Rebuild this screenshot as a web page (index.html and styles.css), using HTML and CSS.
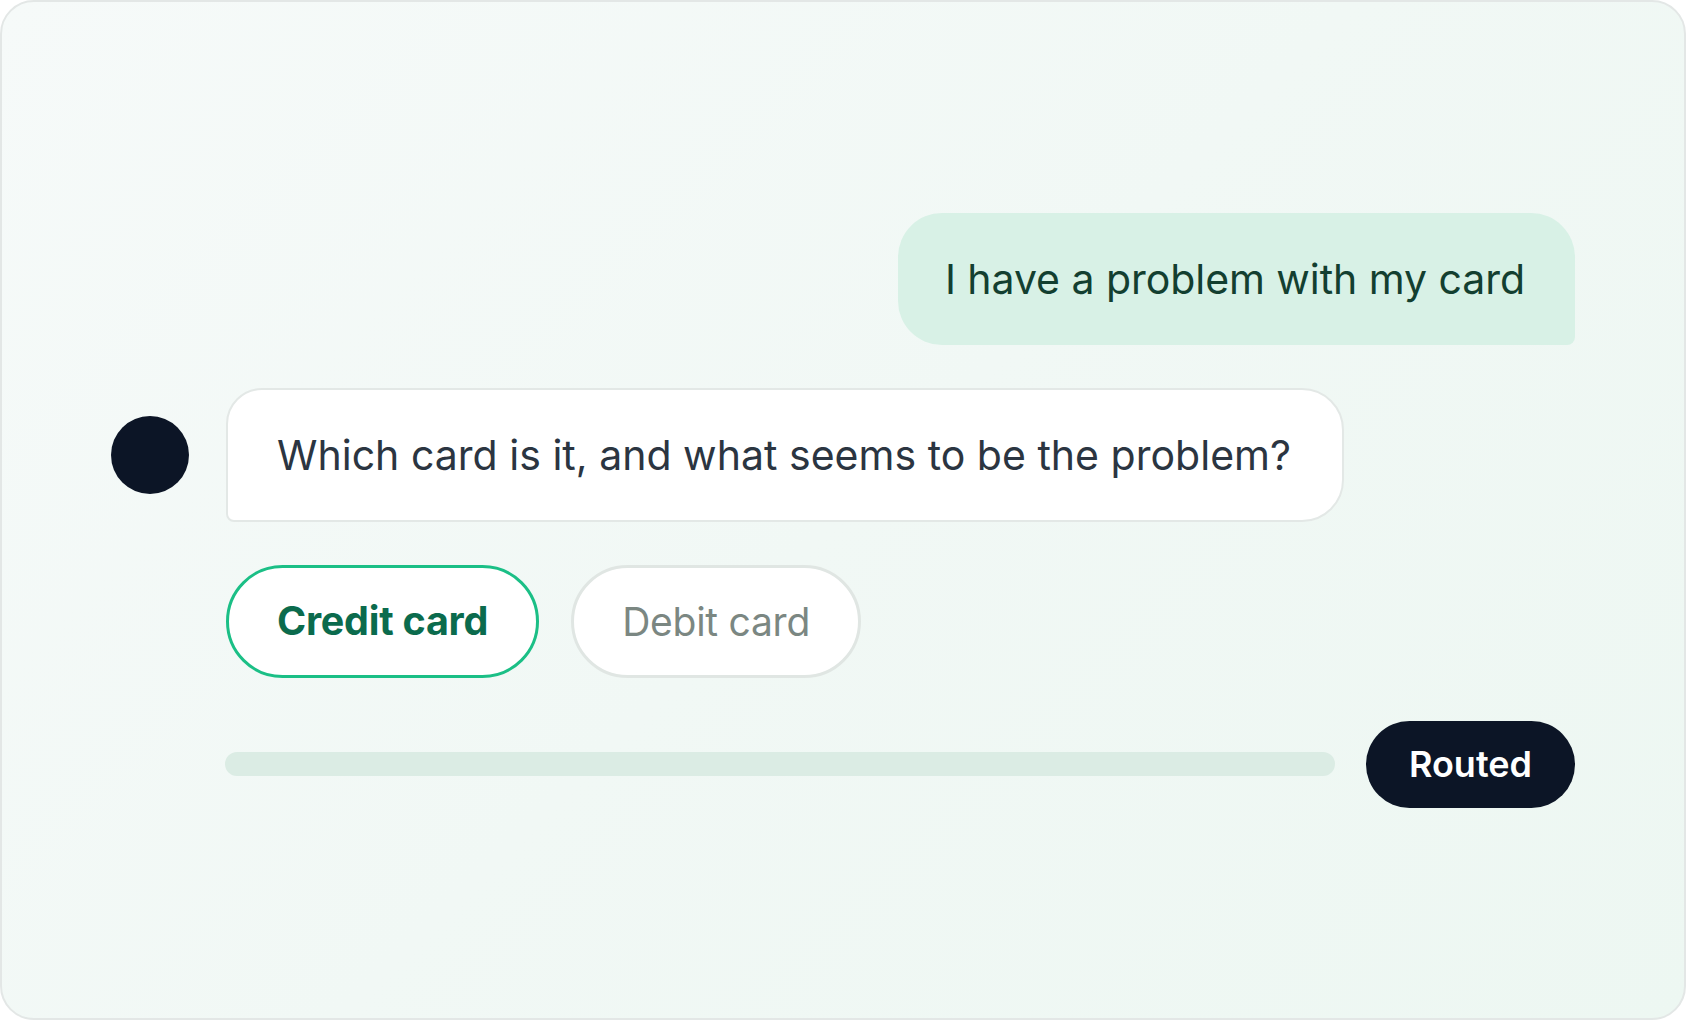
FILE: index.html
```html
<!DOCTYPE html>
<html lang="en">
<head>
<meta charset="utf-8">
<title>Chat routing</title>
<link rel="stylesheet" href="styles.css">
</head>
<body>
<main class="card">
  <div class="thread">
    <div class="row row-user">
      <div class="bubble bubble-user">I have a problem with my card</div>
    </div>
    <div class="row row-bot">
      <div class="avatar"></div>
      <div class="bubble bubble-bot">Which card is it, and what seems to be the problem?</div>
    </div>
    <div class="row row-chips">
      <button class="chip chip-active">Credit card</button>
      <button class="chip">Debit card</button>
    </div>
    <div class="row row-status">
      <div class="bar"></div>
      <div class="pill">Routed</div>
    </div>
  </div>
</main>
</body>
</html>
```
FILE: styles.css
```css
* { box-sizing: border-box; }
html, body { margin: 0; padding: 0; height: 100%; }
body {
  font-family: "Inter", "Lato", "Liberation Sans", sans-serif;
  background: #ffffff;
}
.card {
  height: 1020px;
  width: 1686px;
  border: 2px solid #e3e7e6;
  border-radius: 34px;
  background: linear-gradient(135deg, #f6faf9 0%, #f1f8f5 50%, #edf7f2 100%);
  display: flex;
  flex-direction: column;
  justify-content: center;
  padding: 0 109px;
}
.thread {
  display: flex;
  flex-direction: column;
  gap: 43px;
}
.row { display: flex; align-items: center; }
.row-user { justify-content: flex-end; }
.bubble {
  font-size: 41px;
  line-height: 50px;
  letter-spacing: 0;
}
.bubble-user {
  background: #d8f1e6;
  color: #133f30;
  padding: 41px 50px 41px 47px;
  border-radius: 44px 44px 8px 44px;
  letter-spacing: -0.05px;
}
.row-bot { gap: 37px; }
.avatar {
  width: 78px;
  height: 78px;
  border-radius: 50%;
  background: #0c1526;
  flex: none;
}
.bubble-bot {
  background: #ffffff;
  color: #2b3541;
  border: 2px solid #e3e8e6;
  padding: 40px 51px 40px 49px;
  border-radius: 36px 42px 42px 8px;
  letter-spacing: 0.02px;
}
.row-chips { padding-left: 115px; gap: 32px; }
.chip {
  font-family: inherit;
  height: 113px;
  padding: 0 48px;
  border-radius: 57px;
  background: #ffffff;
  border: 3px solid #e0e6e3;
  color: #7b8782;
  font-size: 39px;
  letter-spacing: -0.25px;
  cursor: pointer;
}
.chip-active {
  border-color: #1bbf86;
  color: #0b6b4d;
  font-weight: 700;
  font-size: 39.5px;
}
.row-status { padding-left: 114px; gap: 31px; }
.bar {
  flex: 1;
  height: 24px;
  border-radius: 12px;
  background: #dbece4;
}
.pill {
  height: 87px;
  padding: 0 43px;
  border-radius: 44px;
  background: #0c1526;
  color: #ffffff;
  font-size: 36px;
  font-weight: 600;
  display: flex;
  align-items: center;
}
```
